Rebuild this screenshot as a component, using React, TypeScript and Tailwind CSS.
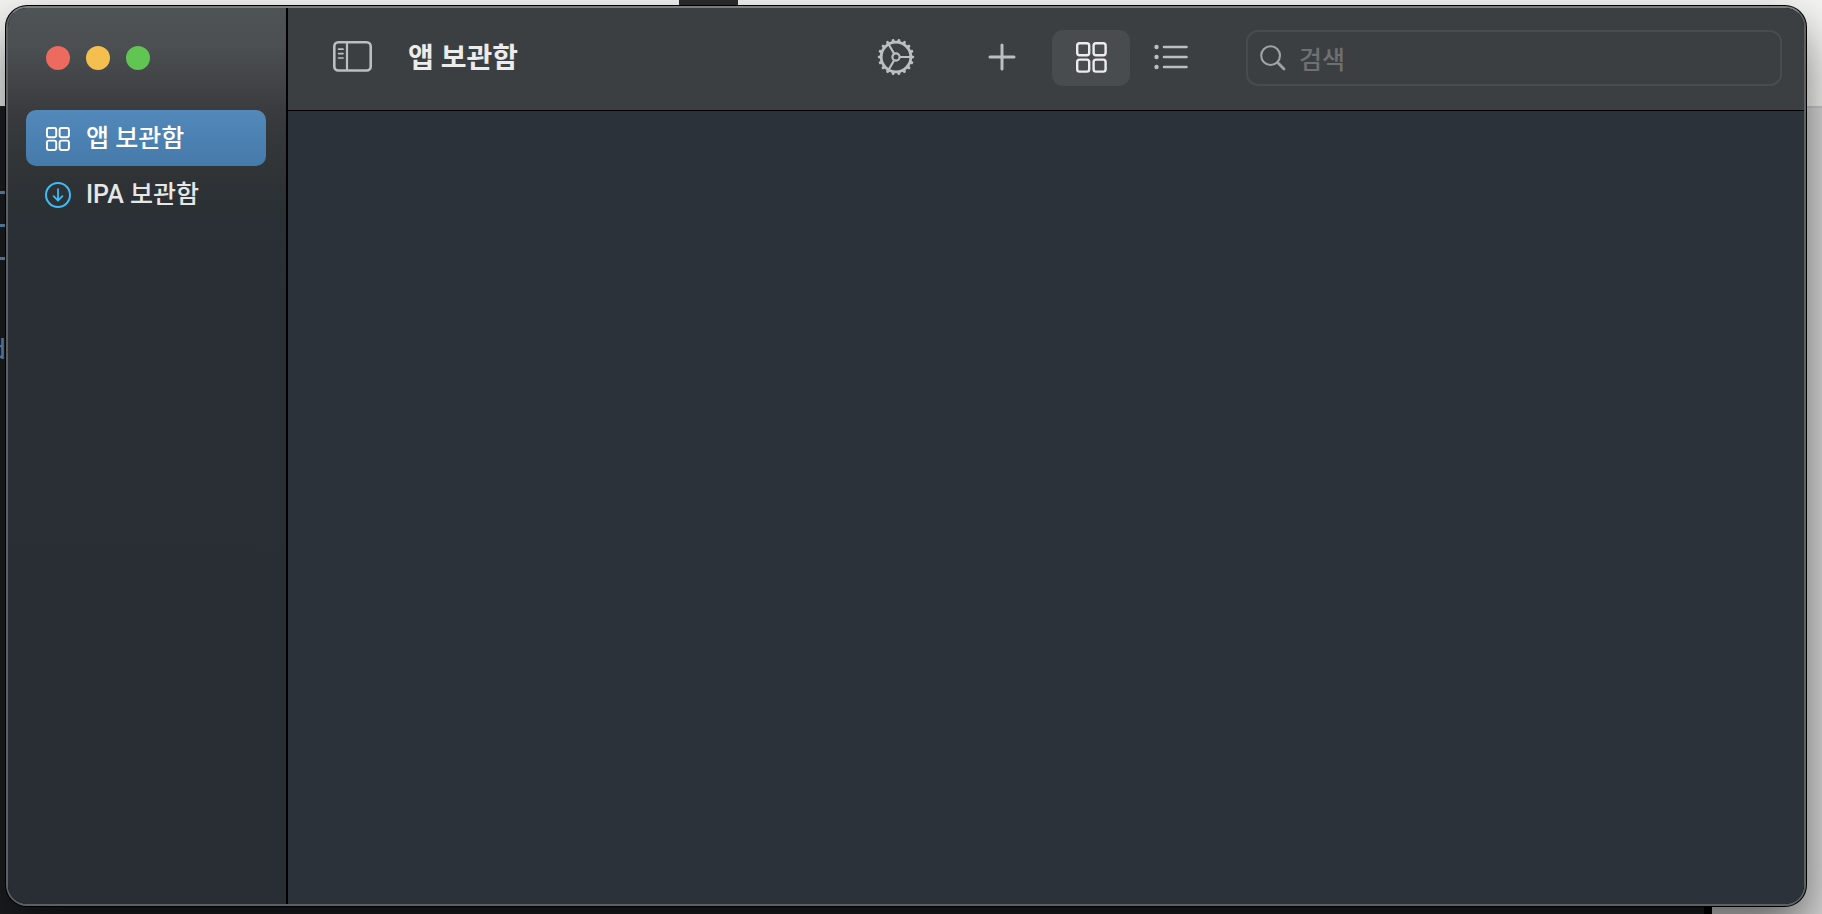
import type { ReactNode } from 'react';

const GEAR_TEETH = Array.from({ length: 18 }, (_, i) => i * 20);
const GEAR_SPOKES = [0, 120, 240];

function GridIcon({ className, stroke }: { className: string; stroke: number }) {
  return (
    <svg className={className} viewBox="0 0 31 31" fill="none" stroke="currentColor" strokeWidth={stroke} aria-hidden="true">
      <rect x="1.2" y="1.2" width="12" height="12" rx="2.4" />
      <rect x="17.6" y="1.2" width="12" height="12" rx="2.4" />
      <rect x="1.2" y="17.6" width="12" height="12" rx="2.4" />
      <rect x="17.6" y="17.6" width="12" height="12" rx="2.4" />
    </svg>
  );
}

function DownloadIcon() {
  return (
    <svg className="size-[26px] text-[#3fbbf8]" viewBox="0 0 26 26" fill="none" stroke="currentColor" strokeWidth="2" strokeLinecap="round" strokeLinejoin="round" aria-hidden="true">
      <circle cx="13" cy="13" r="12" />
      <path d="M13 7.2v11.2M8.6 14.2l4.4 4.4 4.4-4.4" strokeWidth="1.8" />
    </svg>
  );
}

function SidebarIcon() {
  return (
    <svg className="h-[31px] w-[39px]" viewBox="0 0 39 31" fill="none" stroke="currentColor" strokeLinecap="round" aria-hidden="true">
      <rect x="1.3" y="1.3" width="36.4" height="28.2" rx="4" strokeWidth="2.6" />
      <path d="M14 2v27" strokeWidth="2.2" />
      <path d="M5.6 8.2h4.4M5.6 12.6h4.4M5.6 17h4.4" strokeWidth="1.7" />
    </svg>
  );
}

function GearIcon() {
  return (
    <svg className="size-[38px]" viewBox="-19 -19 38 38" fill="none" stroke="currentColor" aria-hidden="true">
      <circle r="14.8" strokeWidth="2.8" />
      <circle r="3.6" strokeWidth="2.2" />
      {GEAR_SPOKES.map((deg) => (
        <path key={deg} d="M4 0H14.5" strokeWidth="2.2" transform={`rotate(${deg})`} />
      ))}
      {GEAR_TEETH.map((deg) => (
        <path key={deg} d="M15.5 -1.8L18 -1.1Q18.5 0 18 1.1L15.5 1.8Z" fill="currentColor" stroke="none" transform={`rotate(${deg})`} />
      ))}
    </svg>
  );
}

function PlusIcon() {
  return (
    <svg className="size-[28px]" viewBox="0 0 28 28" fill="none" stroke="currentColor" strokeWidth="3" strokeLinecap="round" aria-hidden="true">
      <path d="M14 2v24M2 14h24" />
    </svg>
  );
}

function ListIcon() {
  return (
    <svg className="h-[26px] w-[34px]" viewBox="0 0 34 26" stroke="currentColor" strokeWidth="2.6" strokeLinecap="round" aria-hidden="true">
      <path d="M10 3h22.5M10 13h22.5M10 23h22.5" />
      <g fill="currentColor" stroke="none">
        <circle cx="2.5" cy="3" r="2.2" />
        <circle cx="2.5" cy="13" r="2.2" />
        <circle cx="2.5" cy="23" r="2.2" />
      </g>
    </svg>
  );
}

function SearchIcon() {
  return (
    <svg className="size-[26px] shrink-0 text-[#a0a3a4]" viewBox="0 0 26 26" fill="none" stroke="currentColor" strokeLinecap="round" aria-hidden="true">
      <circle cx="10.6" cy="10.6" r="9.4" strokeWidth="2.1" />
      <path d="M17.6 17.6l6.4 6.4" strokeWidth="2.8" />
    </svg>
  );
}

function ToolButton({ label, active, children }: { label: string; active?: boolean; children: ReactNode }) {
  return (
    <button
      type="button"
      aria-label={label}
      className={`flex h-14 w-[78px] shrink-0 items-center justify-center rounded-[11px] pb-[2px] ${
        active ? 'bg-[#484c4e] text-[#ececec]' : 'text-[#b9bfc2]'
      }`}
    >
      {children}
    </button>
  );
}

function NavItem({ icon, label, active }: { icon: ReactNode; label: string; active?: boolean }) {
  return (
    <a
      href="#"
      className={`flex h-14 items-center rounded-[10px] pt-[2px] pl-[19px] text-[25px] font-medium ${
        active ? 'bg-linear-to-b from-[#5389ba] to-[#457aab] text-white' : 'text-[#e6e7e7]'
      }`}
    >
      <span className="flex w-[26px] justify-center">{icon}</span>
      <span className="ml-[15px] whitespace-nowrap">{label}</span>
    </a>
  );
}

// Slices of the windows that sit behind this one
function Desktop() {
  return (
    <div className="absolute inset-0 overflow-hidden bg-[#f4f4f3]" aria-hidden="true">
      <div className="absolute top-0 left-[679px] h-[6px] w-[59px] bg-[#2b2b2b]" />
      <div className="absolute top-[106px] right-0 h-[2px] w-[110px] bg-[#cbcbcb]" />
      <div className="absolute top-[108px] right-0 bottom-0 w-[110px] bg-[#dad9d9]" />
      <div className="absolute top-[106px] right-[110px] bottom-0 left-0 border-r-8 border-black bg-[#1c1f21]">
        <div className="absolute top-[85px] left-0 h-[3px] w-[6px] bg-[#6395c2]" />
        <div className="absolute top-[118px] left-0 h-[3px] w-[6px] bg-[#6395c2]" />
        <div className="absolute top-[151px] left-0 h-[3px] w-[6px] bg-[#6395c2]" />
        <span className="absolute top-[228px] -left-[10px] text-[28px] leading-8 text-[#6395c2]">d</span>
      </div>
    </div>
  );
}

export default function App() {
  return (
    <div className="relative h-screen overflow-hidden pt-[6px] pr-4 pb-2 pl-[6px] font-[Roboto,Noto_Sans_CJK_KR,sans-serif]">
      <Desktop />
      <div className="relative flex h-full overflow-hidden rounded-[21px] border-2 border-[#5d6164] border-t-[#7b7e81] bg-black shadow-[0_0_0_1px_#000,0_24px_50px_rgba(0,0,0,0.55)]">
        <aside className="w-[278px] shrink-0 bg-[linear-gradient(180deg,#4e5355_0px,#4b4f51_40px,#434548_70px,#3a3c3f_100px,#313537_150px,#2b3035_200px,#292f35_300px,#292d34_100%)] pt-[38px] pr-5 pl-[18px]">
          <div className="flex gap-4 pl-5">
            <button type="button" aria-label="닫기" className="size-6 rounded-full bg-[#ed6a5e]" />
            <button type="button" aria-label="최소화" className="size-6 rounded-full bg-[#f5bf4f]" />
            <button type="button" aria-label="확대" className="size-6 rounded-full bg-[#61c554]" />
          </div>
          <nav className="mt-10">
            <NavItem active icon={<GridIcon className="size-6" stroke={2.5} />} label="앱 보관함" />
            <NavItem icon={<DownloadIcon />} label="IPA 보관함" />
          </nav>
        </aside>

        <div className="ml-[2px] flex min-w-0 flex-1 flex-col">
          <header className="flex h-[103px] shrink-0 items-start border-b border-black bg-[#3b3f41] px-[22px] pt-[22px]">
            <button type="button" aria-label="사이드바 토글" className="ml-[23px] flex h-14 shrink-0 items-center pb-[3px] text-[#b9bfc2]">
              <SidebarIcon />
            </button>
            <h1 className="ml-9 flex h-14 items-center pt-px text-[28px] font-bold whitespace-nowrap text-[#ececec]">앱 보관함</h1>
            <div className="ml-auto flex">
              <ToolButton label="설정">
                <GearIcon />
              </ToolButton>
            </div>
            <div className="ml-7">
              <ToolButton label="추가">
                <PlusIcon />
              </ToolButton>
            </div>
            <div className="ml-[11px] flex gap-[2px]">
              <ToolButton label="격자 보기" active>
                <GridIcon className="size-[31px]" stroke={2.4} />
              </ToolButton>
              <ToolButton label="목록 보기">
                <ListIcon />
              </ToolButton>
            </div>
            <label className="ml-9 flex h-14 w-[536px] items-center rounded-xl border-2 border-[#484c4e] pl-3">
              <SearchIcon />
              <input
                type="search"
                aria-label="검색"
                placeholder="검색"
                className="ml-[13px] h-full min-w-0 flex-1 bg-transparent pt-1 text-[25px] font-medium text-[#ececec] outline-none placeholder:text-[#6e7172]"
              />
            </label>
          </header>
          <main className="flex-1 bg-[#2c3239]" />
        </div>
      </div>
    </div>
  );
}
